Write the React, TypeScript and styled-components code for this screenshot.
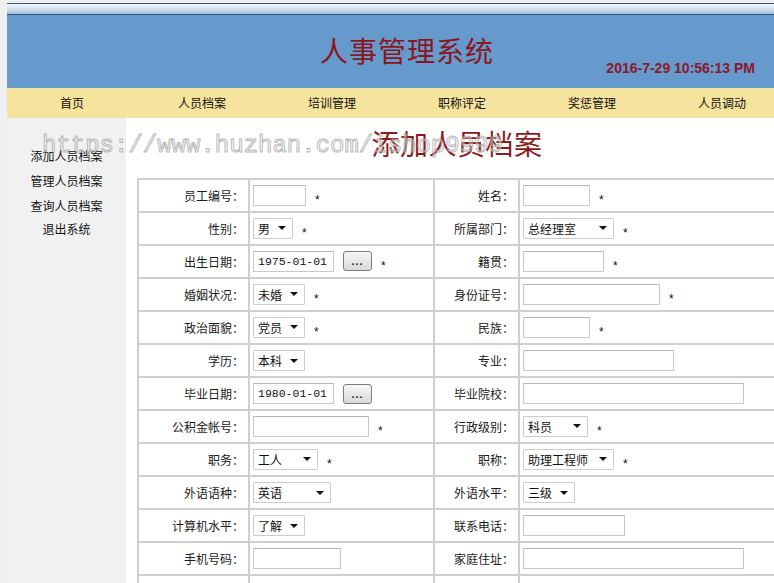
import React from 'react';
import styled, { createGlobalStyle } from 'styled-components';

type Field = {
    label: string;
    kind: 'input' | 'select' | 'date';
    w: number;
    value?: string;
    star?: boolean;
};

const rows: [Field, Field][] = [
    [
        { label: '员工编号', kind: 'input', w: 53, star: true },
        { label: '姓名', kind: 'input', w: 67, star: true },
    ],
    [
        { label: '性别', kind: 'select', w: 40, value: '男', star: true },
        { label: '所属部门', kind: 'select', w: 91, value: '总经理室', star: true },
    ],
    [
        { label: '出生日期', kind: 'date', w: 81, value: '1975-01-01', star: true },
        { label: '籍贯', kind: 'input', w: 81, star: true },
    ],
    [
        { label: '婚姻状况', kind: 'select', w: 52, value: '未婚', star: true },
        { label: '身份证号', kind: 'input', w: 137, star: true },
    ],
    [
        { label: '政治面貌', kind: 'select', w: 52, value: '党员', star: true },
        { label: '民族', kind: 'input', w: 67, star: true },
    ],
    [
        { label: '学历', kind: 'select', w: 52, value: '本科' },
        { label: '专业', kind: 'input', w: 151 },
    ],
    [
        { label: '毕业日期', kind: 'date', w: 81, value: '1980-01-01' },
        { label: '毕业院校', kind: 'input', w: 221 },
    ],
    [
        { label: '公积金帐号', kind: 'input', w: 116, star: true },
        { label: '行政级别', kind: 'select', w: 65, value: '科员', star: true },
    ],
    [
        { label: '职务', kind: 'select', w: 65, value: '工人', star: true },
        { label: '职称', kind: 'select', w: 91, value: '助理工程师', star: true },
    ],
    [
        { label: '外语语种', kind: 'select', w: 78, value: '英语' },
        { label: '外语水平', kind: 'select', w: 52, value: '三级' },
    ],
    [
        { label: '计算机水平', kind: 'select', w: 52, value: '了解' },
        { label: '联系电话', kind: 'input', w: 102 },
    ],
    [
        { label: '手机号码', kind: 'input', w: 88 },
        { label: '家庭住址', kind: 'input', w: 221 },
    ],
];

const navItems = ['首页', '人员档案', '培训管理', '职称评定', '奖惩管理', '人员调动'];
const sideLinks = ['添加人员档案', '管理人员档案', '查询人员档案', '退出系统'];

const FieldCell: React.FC<{ f: Field }> = ({ f }) => (
    <>
        <Label>{f.label}：</Label>
        <Value>
            {f.kind === 'input' && <TextBox $w={f.w} />}
            {f.kind === 'select' && (
                <SelectBox $w={f.w}>
                    <span>{f.value}</span>
                    <Arrow />
                </SelectBox>
            )}
            {f.kind === 'date' && (
                <>
                    <TextBox $w={f.w}>
                        <DateText>{f.value}</DateText>
                    </TextBox>
                    <DotsButton>...</DotsButton>
                </>
            )}
            {f.star && <Star>*</Star>}
        </Value>
    </>
);

const App: React.FC = () => {
    return (
        <Page>
            <GlobalStyle />
            <Frame>
                <TopStrip />
                <Header>
                    <div />
                    <SiteTitle>人事管理系统</SiteTitle>
                    <Clock>2016-7-29 10:56:13 PM</Clock>
                </Header>
                <Nav>
                    {navItems.map((n) => (
                        <NavItem key={n}>{n}</NavItem>
                    ))}
                </Nav>
                <Body>
                    <Sidebar>
                        {sideLinks.map((s) => (
                            <SideLink key={s} $last={s === '退出系统'}>
                                {s}
                            </SideLink>
                        ))}
                    </Sidebar>
                    <Main>
                        <Heading>添加人员档案</Heading>
                        <FormTable>
                            <colgroup>
                                <col style={{ width: 111 }} />
                                <col style={{ width: 185 }} />
                                <col style={{ width: 85 }} />
                                <col />
                            </colgroup>
                            <tbody>
                                {rows.map(([a, b]) => (
                                    <tr key={a.label}>
                                        <FieldCell f={a} />
                                        <FieldCell f={b} />
                                    </tr>
                                ))}
                                <tr>
                                    <Label />
                                    <Value />
                                    <Label />
                                    <Value />
                                </tr>
                            </tbody>
                        </FormTable>
                    </Main>
                    <Watermark>https://www.huzhan.com/ishop9999</Watermark>
                </Body>
            </Frame>
        </Page>
    );
};

const GlobalStyle = createGlobalStyle`
    html, body {
        margin: 0;
        padding: 0;
        overflow: hidden;
        background: #fff;
    }
    body {
        font-family: "Noto Sans CJK SC", "Liberation Sans", sans-serif;
        font-size: 12px;
        color: #111;
    }
`;

const Page = styled.div`
    width: 787px;
    height: 583px;
    padding: 3px 0 0 7px;
    background: #eef0f1;
    box-sizing: border-box;
`;

const Frame = styled.div`
    width: 780px;
    background: #fff;
`;

const TopStrip = styled.div`
    height: 10px;
    border-top: 1px solid #3c5a7c;
    border-bottom: 1px solid #2f5380;
    background: linear-gradient(#f6f9fc, #c9dbec 60%, #9fbddb);
`;

const Header = styled.div`
    height: 73px;
    background: #6699cc;
    display: grid;
    grid-template-columns: 1fr auto 1fr;
`;

const SiteTitle = styled.div`
    margin-left: 20px;
    padding-top: 16px;
    font-size: 28px;
    line-height: 38px;
    color: #8a1620;
    letter-spacing: 1px;
`;

const Clock = styled.div`
    justify-self: end;
    align-self: end;
    margin: 0 32px 12px 0;
    font-family: "Liberation Sans", Arial, sans-serif;
    font-weight: bold;
    font-size: 14px;
    color: #8a1a2c;
    white-space: nowrap;
`;

const Nav = styled.div`
    height: 30px;
    background: #f6e39e;
    display: grid;
    grid-template-columns: repeat(6, 130px);
`;

const NavItem = styled.div`
    text-align: center;
    line-height: 30px;
    font-size: 12px;
    color: #111;
`;

const Body = styled.div`
    position: relative;
    display: grid;
    grid-template-columns: 119px 1fr;
    height: 470px;
`;

const Sidebar = styled.div`
    background: #f1f1f1;
    padding-top: 29px;
    display: flex;
    flex-direction: column;
    align-items: center;
    gap: 8px;
`;

const SideLink = styled.div<{ $last?: boolean }>`
    margin-top: ${(p) => (p.$last ? '-2px' : '0')};
    font-size: 12px;
    line-height: 17px;
    color: #111;
`;

const Main = styled.div`
    padding: 0 11px;
`;

const Heading = styled.div`
    text-align: center;
    font-size: 28px;
    line-height: 36px;
    padding: 7px 0 17px;
    color: #8b1a1a;
    letter-spacing: 0.5px;
`;

const FormTable = styled.table`
    width: 640px;
    table-layout: fixed;
    border-collapse: collapse;
    border: 2px solid #cfcfcf;
`;

const Label = styled.td`
    height: 31px;
    padding: 0 4px 0 0;
    border: 2px solid #cfcfcf;
    text-align: right;
    vertical-align: middle;
    white-space: nowrap;
    font-size: 12px;
    color: #1a1a1a;
`;

const Value = styled.td`
    height: 31px;
    padding: 0 0 0 3px;
    border: 2px solid #cfcfcf;
    vertical-align: middle;
    white-space: nowrap;
`;

const TextBox = styled.span<{ $w: number }>`
    display: inline-flex;
    align-items: center;
    vertical-align: middle;
    box-sizing: border-box;
    width: ${(p) => p.$w}px;
    height: 21px;
    padding-left: 4px;
    border: 1px solid #c9c9c9;
    border-top-color: #b5b5b5;
    border-radius: 1px;
    background: #fff;
`;

const DateText = styled.span`
    font-family: "Liberation Mono", "DejaVu Sans Mono", monospace;
    font-size: 11.5px;
    color: #111;
`;

const SelectBox = styled.span<{ $w: number }>`
    display: inline-flex;
    align-items: center;
    justify-content: space-between;
    vertical-align: middle;
    box-sizing: border-box;
    width: ${(p) => p.$w}px;
    height: 21px;
    padding: 0 6px 0 4px;
    border: 1px solid #cdcdcd;
    border-radius: 1px;
    background: #fff;
    font-size: 12px;
    color: #111;
`;

const Arrow = styled.span`
    width: 0;
    height: 0;
    border-left: 4px solid transparent;
    border-right: 4px solid transparent;
    border-top: 4px solid #111;
`;

const DotsButton = styled.span`
    display: inline-flex;
    align-items: center;
    justify-content: center;
    vertical-align: middle;
    box-sizing: border-box;
    width: 29px;
    height: 20px;
    margin-left: 9px;
    border: 1px solid #7d7d7d;
    border-radius: 3px;
    background: linear-gradient(#f7f7f7, #d9d9d9);
    font-family: "Liberation Sans", Arial, sans-serif;
    font-weight: bold;
    font-size: 11px;
    letter-spacing: 1px;
    line-height: 14px;
    color: #222;
`;

const Star = styled.span`
    display: inline-block;
    margin-left: 9px;
    vertical-align: -5px;
    font-family: "Liberation Sans", Arial, sans-serif;
    font-size: 12px;
    color: #111;
`;

const Watermark = styled.div`
    position: absolute;
    left: 35px;
    top: 14px;
    font-family: "Liberation Mono", "Courier New", monospace;
    font-size: 24px;
    color: rgba(255, 255, 255, 0.35);
    -webkit-text-stroke: 1px rgba(160, 160, 160, 0.75);
    pointer-events: none;
    white-space: nowrap;
`;

export default App;
